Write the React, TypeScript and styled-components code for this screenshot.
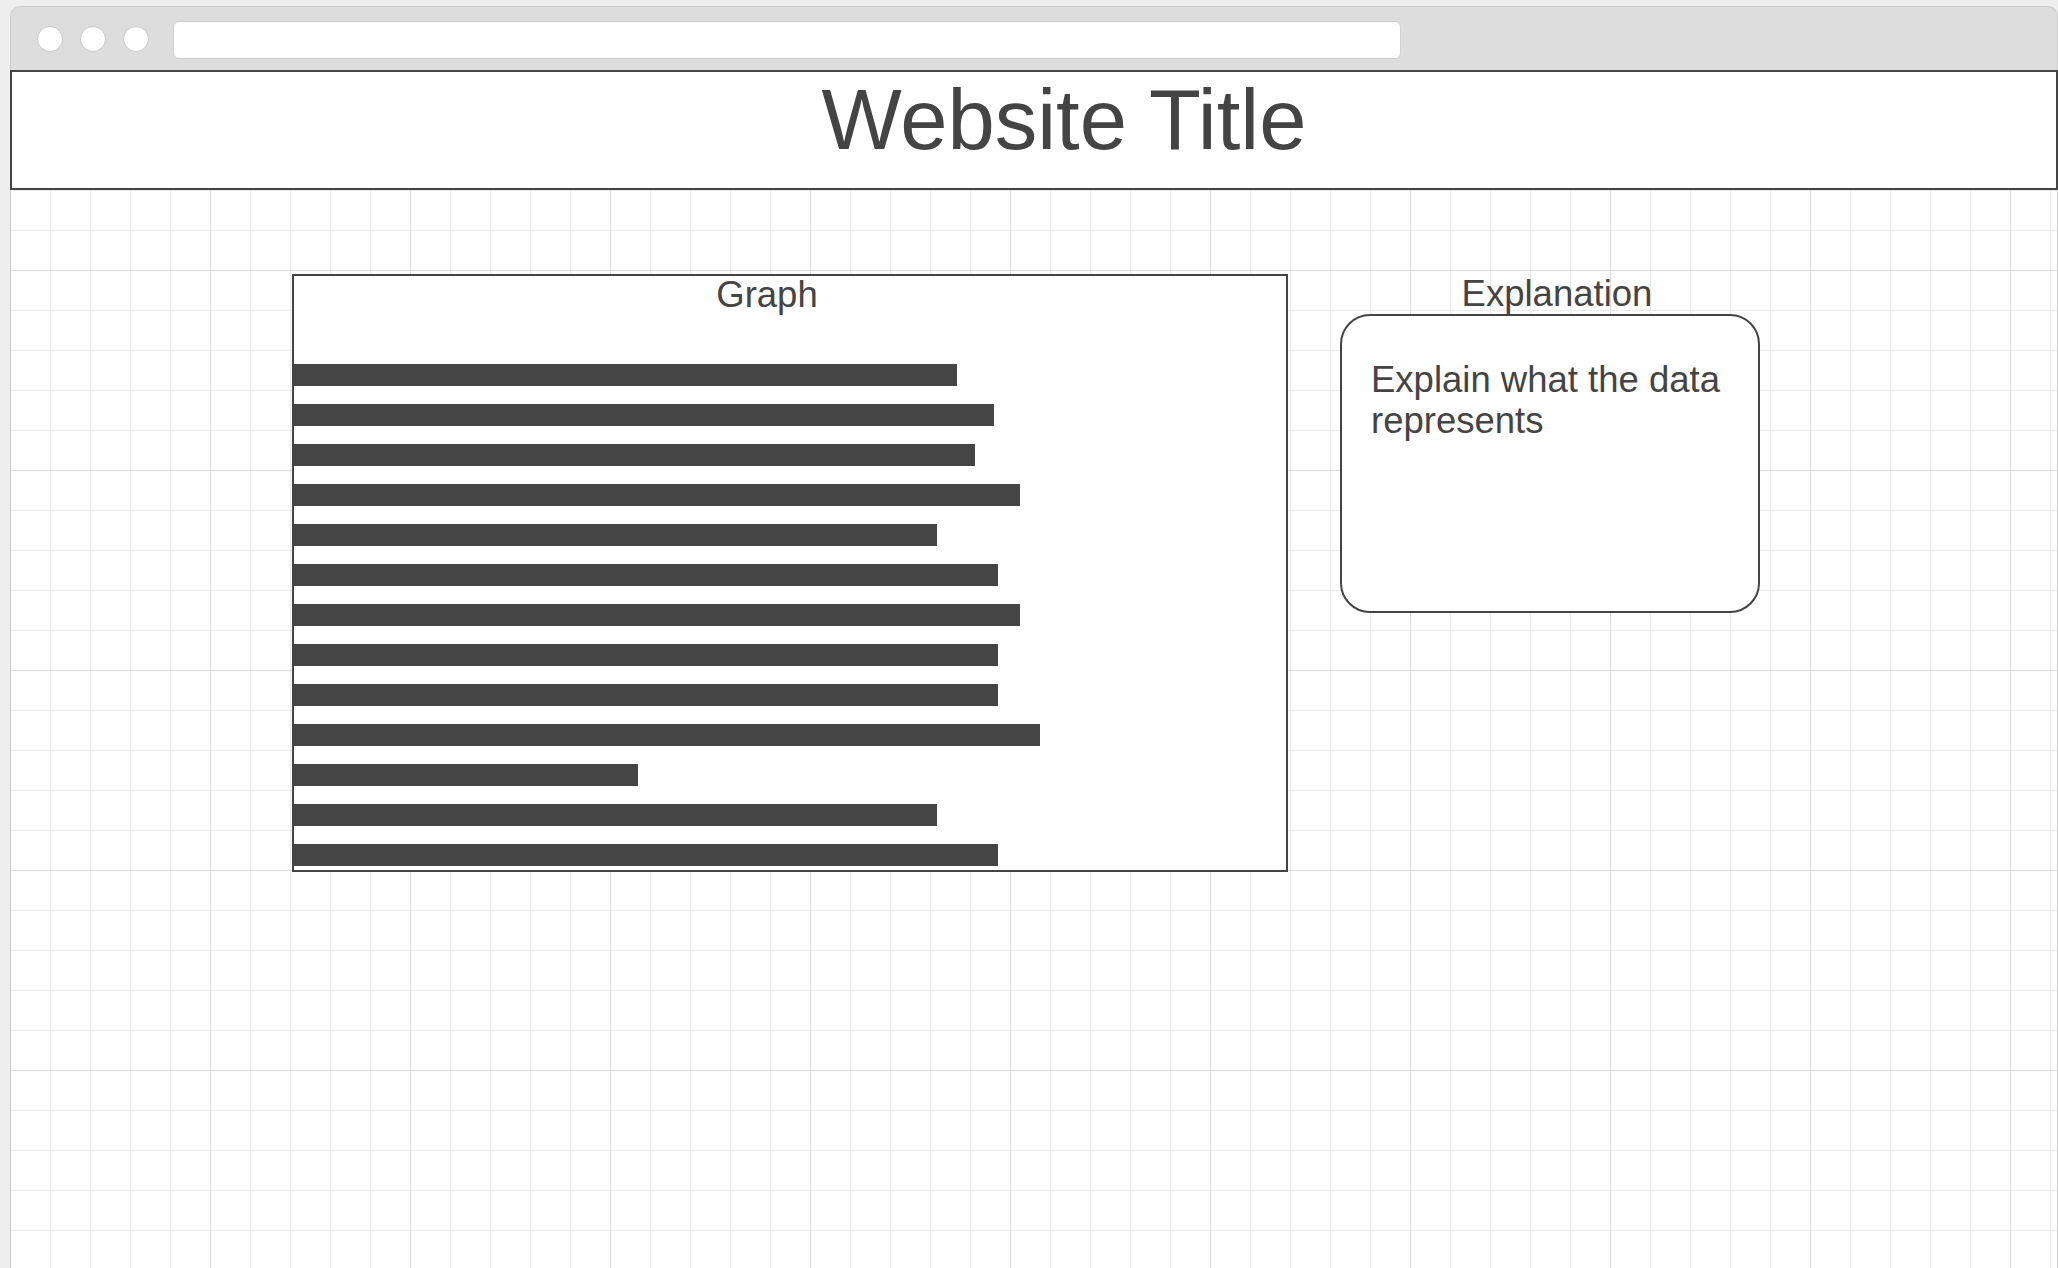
import styled, { createGlobalStyle } from "styled-components";

const GlobalStyle = createGlobalStyle`
  html, body {
    margin: 0;
    padding: 0;
    background: #eeeeee;
    font-family: "Liberation Sans", Arial, sans-serif;
    color: #444444;
  }
`;

const BrowserFrame = styled.div`
  margin: 6px 0 0 10px;
  width: 2048px;
  min-height: calc(100vh - 6px);
  box-sizing: border-box;
  border: 1px solid #cccccc;
  border-bottom: none;
  border-radius: 10px 10px 0 0;
  background: #dddddd;
  display: flex;
  flex-direction: column;
`;

const TitleBar = styled.div`
  height: 63px;
  box-sizing: border-box;
  padding: 14px 0 0 26px;
  display: flex;
  align-items: flex-start;
`;

const WindowDot = styled.span`
  width: 24px;
  height: 24px;
  margin: 5px 17px 0 0;
  border: 1.5px solid #c9c9c9;
  border-radius: 50%;
  background: #ffffff;
  flex-shrink: 0;
`;

const AddressBar = styled.div`
  margin-left: 7px;
  width: 1228px;
  height: 38px;
  box-sizing: border-box;
  border: 1px solid #d0d0d0;
  border-radius: 6px;
  background: #ffffff;
`;

const Header = styled.header`
  margin: 0 -1px;
  height: 120px;
  box-sizing: border-box;
  border: 2px solid #444444;
  background: #ffffff;
  padding: 5px 0 0 60px;
  text-align: center;
`;

const SiteTitle = styled.h1`
  margin: 0;
  font-size: 85px;
  line-height: 85px;
  font-weight: normal;
  color: #444444;
`;

const Canvas = styled.main`
  flex: 1;
  background-color: #ffffff;
  background-image: linear-gradient(to right, #dcdcdc 1px, transparent 1px),
    linear-gradient(to bottom, #dcdcdc 1px, transparent 1px),
    linear-gradient(to right, #ebebeb 1px, transparent 1px),
    linear-gradient(to bottom, #ebebeb 1px, transparent 1px);
  background-size: 200px 200px, 200px 200px, 40px 40px, 40px 40px;
  background-position: 199px 80px, 199px 80px, 39px 0, 39px 0;
  padding: 84px 0 0 281px;
  display: flex;
  align-items: flex-start;
  gap: 52px;
`;

const GraphBox = styled.section`
  width: 996px;
  height: 598px;
  box-sizing: border-box;
  border: 2px solid #444444;
  background: #ffffff;
  display: flex;
  flex-direction: column;
`;

const Label = styled.div<{ $shift: number }>`
  font-size: 36.5px;
  line-height: 38px;
  text-align: center;
  color: #444444;
  white-space: nowrap;
  padding-left: ${(p) => Math.max(p.$shift, 0) * 2}px;
  padding-right: ${(p) => Math.max(-p.$shift, 0) * 2}px;
`;

const Bars = styled.div`
  margin-top: 50px;
  display: flex;
  flex-direction: column;
  gap: 18px;
`;

const Bar = styled.div`
  height: 22px;
  background: #454545;
`;

const ExplanationColumn = styled.aside`
  width: 420px;
  display: flex;
  flex-direction: column;
`;

const ExplanationLabel = styled(Label)`
  line-height: 40px;
`;

const ExplanationCard = styled.div`
  height: 299px;
  box-sizing: border-box;
  border: 2px solid #444444;
  border-radius: 30px;
  background: #ffffff;
  padding: 43px 26px 0 29px;
  font-size: 36.5px;
  line-height: 41px;
  color: #444444;
`;

const barWidths = [663, 700, 681, 726, 643, 704, 726, 704, 704, 746, 344, 643, 704];

export default function App() {
  return (
    <>
      <GlobalStyle />
      <BrowserFrame>
        <TitleBar>
          <WindowDot />
          <WindowDot />
          <WindowDot />
          <AddressBar />
        </TitleBar>
        <Header>
          <SiteTitle>Website Title</SiteTitle>
        </Header>
        <Canvas>
          <GraphBox>
            <Label $shift={-23}>Graph</Label>
            <Bars>
              {barWidths.map((w, i) => (
                <Bar key={i} style={{ width: w }} />
              ))}
            </Bars>
          </GraphBox>
          <ExplanationColumn>
            <ExplanationLabel $shift={7}>Explanation</ExplanationLabel>
            <ExplanationCard>Explain what the data represents</ExplanationCard>
          </ExplanationColumn>
        </Canvas>
      </BrowserFrame>
    </>
  );
}
